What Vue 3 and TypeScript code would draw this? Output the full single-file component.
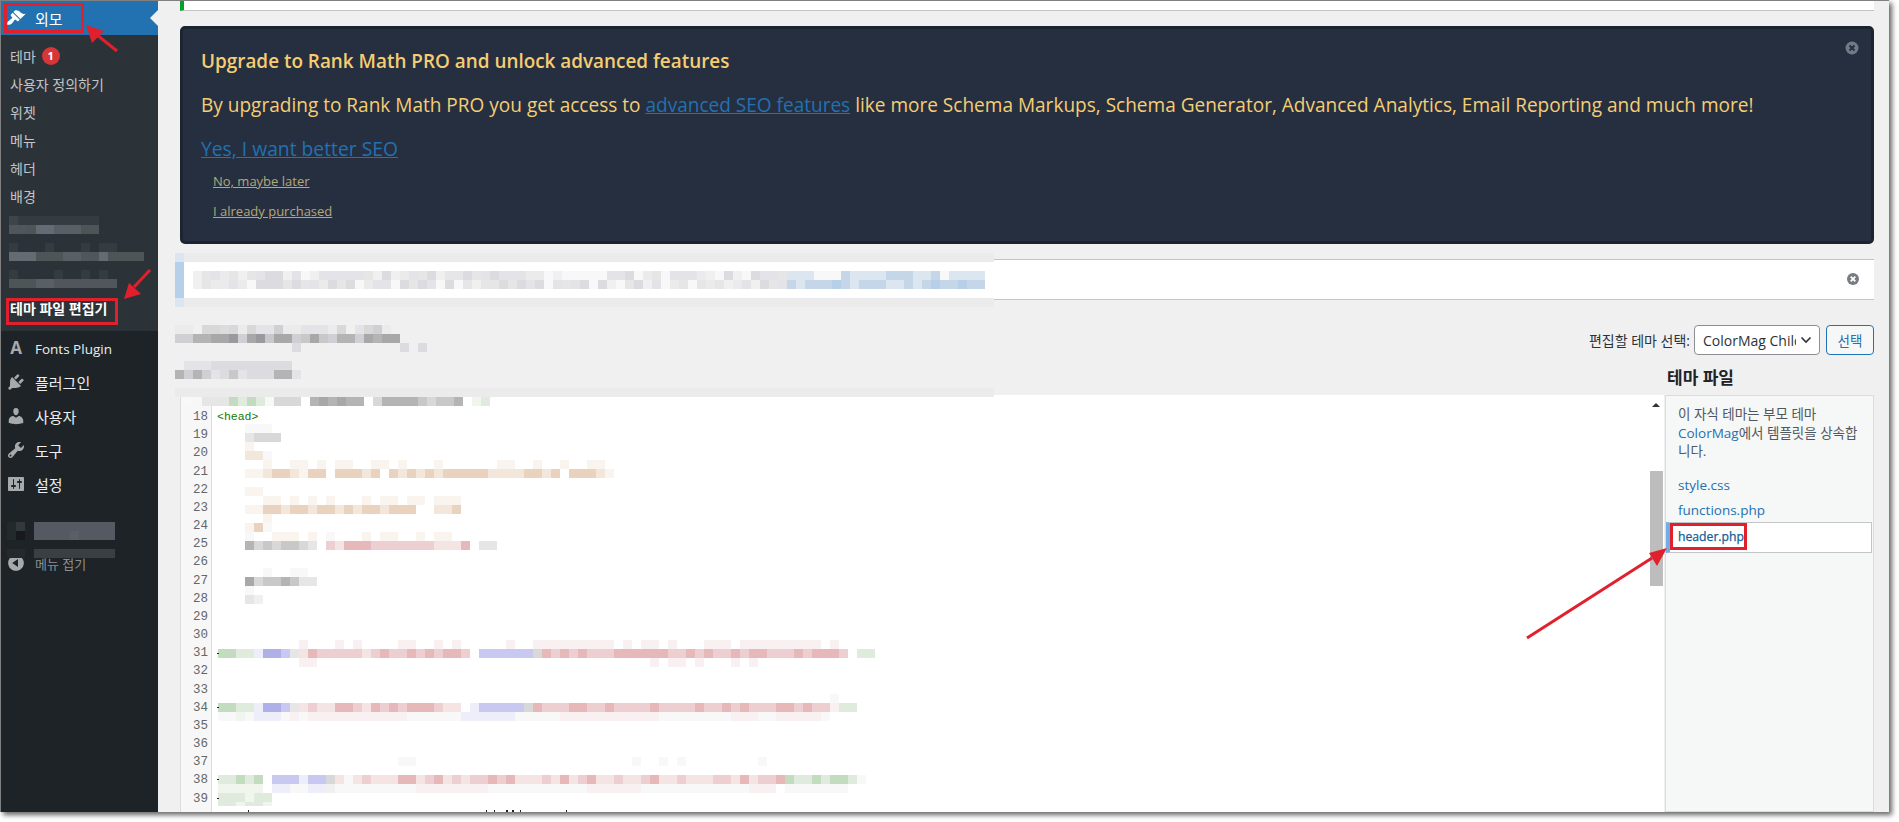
<script setup lang="ts">
type Mosaic = { x: number; y: number; rows: string[]; h?: number }

const palette: Record<string, string> = {
  a: '#f8f8f8', b: '#f0f0f0', c: '#e6e6e6', d: '#d8d8d8', e: '#c8c8c8', f: '#b4b4b4', g: '#a8a8a8', k: '#989a9e',
  K: '#ebebec', l: '#e4e4e8', m: '#dcdce0', n: '#d0d0d4',
  o: '#faf4ef', p: '#f3e6da', q: '#e9d3bf',
  r: '#f5e4e4', s: '#edcfd1', t: '#e6b8ba', u: '#f9f1f1',
  v: '#f0f5ee', w: '#dfebdc', x: '#c3dcbf',
  y: '#eeeefb', z: '#c8c8f0', Z: '#b0b0e8',
  h: '#dbe6f0', i: '#c4d6e8', j: '#b5d0e8',
  A: '#343b41', B: '#3d444a', C: '#464c52', D: '#50565b', E: '#5a5f66', F: '#666a72', G: '#4d5556',
  H: '#24292c', I: '#17191c', J: '#33383c', L: '#555a62', M: '#4a4d52', N: '#3a3f44',
}

let seed = 7
const s = (chars: string, n: number): string => {
  let out = ''
  for (let i = 0; i < n; i++) {
    seed = (seed * 1103515245 + 12345) % 2147483648
    out += chars[(seed >> 8) % chars.length]
  }
  return out
}
const gap = (n: number): string => '.'.repeat(n)

const mosaics: Mosaic[] = [
  // sidebar
  { x: 9, y: 216, rows: [s('ABCA', 10), s('DEFG', 10)] },
  { x: 9, y: 243, rows: ['A...A...A.AA', s('DEGF', 15)] },
  { x: 9, y: 270, rows: ['A....A..A.A', s('DEGF', 12)] },
  { x: 7, y: 522, rows: ['HJ', 'HI'] },
  { x: 34, y: 522, rows: [s('LMNL', 9), s('LMEL', 9)] },
  { x: 7, y: 549, rows: ['HH'] },
  { x: 34, y: 549, rows: ['NNNNNNNNN'] },
  // notice
  { x: 175, y: 253, rows: ['h' + 'K'.repeat(90)] },
  { x: 175, y: 262, rows: ['j', 'j', 'j', 'j'] },
  { x: 175, y: 298, rows: ['h' + 'K'.repeat(90)] },
  {
    x: 193, y: 271,
    rows: [
      s('lmabKcl', 66) + s('hhiah', 22),
      s('alKmcmb', 66) + s('ijihi', 22),
    ],
  },
  // headings
  { x: 175, y: 325, rows: [s('lmbKnd.', 25)] },
  { x: 175, y: 334, rows: [s('nfgkfge', 25)] },
  { x: 175, y: 343, rows: ['.............m...........m.m'] },
  { x: 175, y: 361, rows: ['.' + s('mnel', 12)] },
  { x: 175, y: 370, rows: [s('lmenf', 14)] },
  { x: 175, y: 388, rows: ['K'.repeat(91)] },
  {
    x: 175, y: 397,
    rows: ['.a.' + s('c', 3) + 'xwxwa' + 'ddd' + '.' + 'fgfgff' + '.' + s('efd', 10) + '.' + 'vw'],
  },
  // editor lines
  {
    x: 218, y: 424,
    rows: [
      '...aaa',
      '...cddd',
      '...o',
      '...ppa',
      '.....o..oo.o.oo..oo.o...o......oo..o..o..oo',
      '...oop' + 'qqp' + 'o' + 'qq' + '.' + 'qqqpq' + '.' + s('pqq', 19) + '.' + 'qqqpo',
      gap(5),
      '...oo',
      '.....oo.o.o.o...o.oo.oo.ooo',
      '...oo' + s('qqp', 17) + '..' + 'ppq',
      '.....o',
      '...oqa',
      '...a..ooo.o.a...o.oo..o.oo',
      '...fdedeedc.' + s('sstr', 16) + '.cc',
      gap(5),
      gap(5),
      '.....a..aa',
      '...gdeefecc',
      '...a',
      '...cb',
    ],
  },
  {
    x: 218, y: 640,
    rows: [
      '.........u...u.u....uu..u.u.....u..uuuuuuuuu.u.uu.u...uuu.uuuuuuuuu.u',
      'xxwwyZZzc' + s('rsstt', 19) + '.' + 'zzzzzz' + 'd' + s('sstts', 34) + '.ww',
      '.........uu.....................................u.uu.u...u.u',
    ],
  },
  {
    x: 218, y: 694,
    rows: [
      gap(68) + 'a',
      'xxwwyZZzc' + s('rsstt', 18) + '.' + 'yzzzzz' + 'd' + s('sstts', 33) + 'uww',
      s('av', 4) + 'yyya' + s('ua', 19) + 'yyyyyya' + s('ua', 33) + 'a',
    ],
  },
  {
    x: 218, y: 757,
    rows: [
      gap(20) + 'aa' + gap(24) + 'a..a.a' + gap(8) + 'a',
      gap(5),
      'wwxwx.zzzyzzd' + 'ra' + s('rsstr', 48) + s('wwx', 8) + 'a',
      s('av', 5) + '.yyaayyb' + s('ua', 49) + '.' + s('av', 7),
      s('wwv', 6),
    ],
  },
  { x: 218, y: 802, h: 4, rows: ['wwvwwv'] },
]

const cells = mosaics.flatMap((m) =>
  m.rows.flatMap((row, r) =>
    [...row].flatMap((ch, c) =>
      ch === '.'
        ? []
        : [{ x: m.x + c * 9, y: m.y + r * 9, h: m.h ?? 9, fill: palette[ch] }],
    ),
  ),
)

const ticks: [number, number, number, number][] = [
  [217, 653, 2, 1], [217, 707, 2, 1], [217, 779, 2, 1], [217, 798, 2, 1],
  [248, 810, 1, 2], [486, 810, 1, 2], [494, 810, 1, 2], [506, 810, 2, 2], [512, 810, 2, 2], [520, 810, 1, 2], [566, 810, 1, 2],
]

const subItems = ['테마', '사용자 정의하기', '위젯', '메뉴', '헤더', '배경', '', '', '']

const lineNumbers = Array.from({ length: 22 }, (_, i) => 18 + i)

const icons = {
  appearance:
    'M14.48 11.06L7.41 3.99l1.5-1.5c.5-.56 2.3-.47 3.51.32 1.21.8 1.43 1.28 2.91 2.1 1.18.64 2.45 1.26 4.45.85zm-.71.71L6.7 4.7 4.93 6.47c-.39.39-.39 1.02 0 1.41l1.06 1.06c.39.39.39 1.03 0 1.42-.6.6-1.43 1.11-2.21 1.69-.35.26-.7.53-1.01.84C1.43 13.23.91 15.03 1.3 16.7c1.66.39 3.45-.14 4.8-1.48.31-.31.58-.66.84-1.01.58-.78 1.09-1.61 1.69-2.21.39-.39 1.02-.39 1.41 0l1.06 1.06c.39.39 1.02.39 1.41 0z',
  plugins:
    'M13.11 4.36L9.87 7.6 8 5.73l3.24-3.24c.35-.34 1.05-.2 1.56.32.52.51.66 1.21.31 1.55zm-8 1.77l.91-1.12 9.01 9.01-1.19.84c-.71.71-2.63 1.16-3.82 1.16H6.14L4.9 17.26c-.59.59-1.54.59-2.12 0-.59-.58-.59-1.53 0-2.12l1.24-1.24v-3.88c0-1.13.4-3.19 1.09-3.89zm7.26 3.97l3.24-3.24c.34-.35 1.04-.21 1.55.31.52.51.66 1.21.31 1.55l-3.24 3.25z',
  users:
    'M10 9.25c-2.27 0-2.73-3.44-2.73-3.44C7 4.02 7.82 2 9.97 2c2.16 0 2.98 2.02 2.71 3.81 0 0-.41 3.44-2.68 3.44zm0 2.57L12.72 10c2.39 0 4.52 2.33 4.52 4.53v2.49s-3.65 1.13-7.24 1.13c-3.65 0-7.24-1.13-7.24-1.13v-2.49c0-2.25 1.94-4.48 4.47-4.48z',
  tools:
    'M16.68 9.77c-1.34 1.34-3.3 1.67-4.95.99l-5.41 6.52c-.99.99-2.59.99-3.58 0s-.99-2.59 0-3.57l6.52-5.42c-.68-1.65-.35-3.61.99-4.95 1.28-1.28 3.12-1.62 4.72-1.06l-2.89 2.89 2.82 2.82 2.86-2.87c.53 1.58.18 3.39-1.08 4.65zM3.81 16.21c.4.39 1.04.39 1.43 0 .4-.4.4-1.04 0-1.43-.39-.4-1.03-.4-1.43 0-.39.39-.39 1.03 0 1.43z',
  settings:
    'M18 16V4c0-.55-.45-1-1-1H3c-.55 0-1 .45-1 1v12c0 .55.45 1 1 1h14c.55 0 1-.45 1-1zM8 11h1c.55 0 1 .45 1 1s-.45 1-1 1H8v1.5c0 .28-.22.5-.5.5s-.5-.22-.5-.5V13H6c-.55 0-1-.45-1-1s.45-1 1-1h1V5.5c0-.28.22-.5.5-.5s.5.22.5.5V11zm5-2h-1c-.55 0-1-.45-1-1s.45-1 1-1h1V5.5c0-.28.22-.5.5-.5s.5.22.5.5V7h1c.55 0 1 .45 1 1s-.45 1-1 1h-1v5.5c0 .28-.22.5-.5.5s-.5-.22-.5-.5V9z',
  collapse:
    'M10 2.16c4.33 0 7.84 3.51 7.84 7.84s-3.51 7.84-7.84 7.84S2.16 14.33 2.16 10 5.71 2.16 10 2.16zm2 11.72V6.12L6.18 9.97z',
}

const topItems = [
  { label: '플러그인', icon: icons.plugins },
  { label: '사용자', icon: icons.users },
  { label: '도구', icon: icons.tools },
  { label: '설정', icon: icons.settings },
]
</script>

<template>
  <div class="page">
    <div class="window">
      <aside class="sidebar">
        <div class="menu-item active">
          <svg class="icon" viewBox="0 0 20 20"><path :d="icons.appearance" /></svg>
          <span>외모</span>
          <i class="notch"></i>
        </div>
        <div class="submenu">
          <div v-for="(item, i) in subItems" :key="i" class="sub-item">
            {{ item }}<b v-if="i === 0" class="badge">1</b>
          </div>
          <div class="sub-item current">테마 파일 편집기</div>
        </div>
        <div class="menu-item">
          <span class="icon letter">A</span>
          <span class="latin">Fonts Plugin</span>
        </div>
        <div v-for="item in topItems" :key="item.label" class="menu-item">
          <svg class="icon" viewBox="0 0 20 20"><path :d="item.icon" /></svg>
          <span>{{ item.label }}</span>
        </div>
        <div class="menu-item spaced"></div>
        <div class="menu-item dim">
          <svg class="icon" viewBox="0 0 20 20"><path :d="icons.collapse" /></svg>
          <span class="collapse-label">메뉴 접기</span>
        </div>
      </aside>

      <main class="main">
        <div class="top-notice"></div>

        <section class="promo">
          <svg class="promo-close" viewBox="0 0 14 14">
            <circle cx="7" cy="7" r="6.5" />
            <path d="M4.5 4.5l5 5m0-5l-5 5" />
          </svg>
          <h2>Upgrade to Rank Math PRO and unlock advanced features</h2>
          <p>By upgrading to Rank Math PRO you get access to <a>advanced SEO features</a> like more Schema Markups, Schema Generator, Advanced Analytics, Email Reporting and much more!</p>
          <a class="yes">Yes, I want better SEO</a>
          <a class="minor">No, maybe later</a>
          <a class="minor">I already purchased</a>
        </section>

        <div class="notice">
          <svg class="notice-close" viewBox="0 0 14 14">
            <circle cx="7" cy="7" r="6" />
            <path d="M4.7 4.7l4.6 4.6m0-4.6l-4.6 4.6" />
          </svg>
        </div>

        <div class="theme-select">
          <label>편집할 테마 선택:</label>
          <div class="select">
            <span>ColorMag Child</span>
            <svg viewBox="0 0 12 8"><path d="M1.5 1.5L6 6l4.5-4.5" /></svg>
          </div>
          <button class="btn">선택</button>
        </div>

        <h3 class="files-title">테마 파일</h3>

        <div class="workspace">
          <div class="editor">
            <div class="gutter">
              <div v-for="n in lineNumbers" :key="n" class="line-no">{{ n }}</div>
            </div>
            <div class="code"><span class="tag">&lt;head&gt;</span></div>
            <div class="scrollbar">
              <i class="scroll-up"></i>
              <i class="thumb"></i>
            </div>
          </div>
          <div class="files">
            <p class="files-note">
              이 자식 테마는 부모 테마<br />
              <a>ColorMag</a>에서 템플릿을 상속합<br />
              니다.
            </p>
            <a class="file">style.css</a>
            <a class="file">functions.php</a>
            <a class="file selected">header.php</a>
          </div>
        </div>
      </main>
    </div>

    <svg class="overlay" viewBox="0 0 1899 822" width="1899" height="822">
      <g shape-rendering="crispEdges">
        <rect v-for="(c, i) in cells" :key="i" :x="c.x" :y="c.y" width="9" :height="c.h" :fill="c.fill" />
        <rect v-for="(t, i) in ticks" :key="'t' + i" :x="t[0]" :y="t[1]" :width="t[2]" :height="t[3]" fill="#222" />
      </g>
      <g fill="none" stroke="#e0202c" stroke-width="3">
        <rect x="5.5" y="4.5" width="77" height="27" />
        <rect x="7.5" y="299.5" width="109" height="24" />
        <rect x="1671.5" y="524.5" width="74" height="24" />
      </g>
      <g stroke="#e0202c" stroke-width="3" fill="#e0202c">
        <path d="M97 35L117 51" />
        <path stroke="none" d="M86 25L104 31L92 43Z" />
        <path d="M134 287L150 270" />
        <path stroke="none" d="M124 299L129 283L141 294Z" />
        <path d="M1527 638L1652 558" />
        <path stroke="none" d="M1667 548L1649 553L1657 566Z" />
      </g>
    </svg>
  </div>
</template>

<style>
html, body { margin: 0; background: #fff; }
</style>

<style scoped>
.page {
  position: relative;
  width: 1899px;
  height: 822px;
  background: #fff;
  overflow: hidden;
  font-family: "Open Sans", "Noto Sans CJK KR", sans-serif;
}
.window {
  display: flex;
  width: 1888px;
  height: 811px;
  border-top: 1px solid #808080;
  border-left: 1px solid #808080;
  background: #f0f0f1;
  overflow: hidden;
  box-shadow: 3px 3px 5px rgba(0, 0, 0, 0.6);
}
.overlay {
  position: absolute;
  left: 0;
  top: 0;
  pointer-events: none;
}

/* sidebar */
.sidebar {
  flex: 0 0 157px;
  background: #1d2327;
  color: #f0f0f1;
}
.menu-item {
  position: relative;
  display: flex;
  align-items: center;
  gap: 9px;
  height: 34px;
  padding-left: 5px;
  font-size: 15px;
  color: #eceeef;
}
.menu-item.active {
  background: #2271b1;
  color: #fff;
}
.menu-item.spaced { margin-top: 11px; }
.menu-item.dim { color: #a7aaad; }
.icon {
  flex: 0 0 20px;
  width: 20px;
  height: 20px;
  fill: #a7aaad;
}
.active .icon { fill: #fff; }
.letter {
  font-size: 17px;
  font-weight: 700;
  color: #a7aaad;
  text-align: center;
  line-height: 20px;
}
.latin { font-size: 13.5px; line-height: 20px; padding-top: 1px; }
.collapse-label { font-size: 13px; color: #8c8f94; }
.notch {
  position: absolute;
  right: 0;
  top: 9px;
  border: 8px solid transparent;
  border-right-color: #f0f0f1;
  border-left-width: 0;
}
.submenu {
  background: #2c3338;
  padding: 7px 0 9px;
}
.sub-item {
  display: flex;
  align-items: center;
  height: 28px;
  padding-left: 9px;
  font-size: 14px;
  color: #c3c4c7;
}
.sub-item.current {
  color: #fff;
  font-weight: 700;
}
.badge {
  width: 18px;
  height: 18px;
  margin-left: 6px;
  border-radius: 50%;
  background: #d63638;
  color: #fff;
  font-size: 11px;
  line-height: 18px;
  text-align: center;
}

/* main */
.main {
  flex: 1;
  min-width: 0;
  display: flex;
  flex-direction: column;
  padding: 0 15px 0 22px;
}
.top-notice {
  flex: none;
  height: 9px;
  background: #fff;
  border-left: 4px solid #00a32a;
  border-bottom: 1px solid #c3c4c7;
}
.promo {
  position: relative;
  flex: none;
  box-sizing: border-box;
  height: 218px;
  margin-top: 15px;
  padding: 20px 0 0 18px;
  background: #262f40;
  border: 3px solid #1b2431;
  border-radius: 5px;
  color: #f5cd73;
  display: flex;
  flex-direction: column;
  align-items: flex-start;
}
.promo-close {
  position: absolute;
  right: 12px;
  top: 12px;
  width: 14px;
  height: 14px;
}
.promo-close circle { fill: #727a86; }
.promo-close path { stroke: #262f40; stroke-width: 2; }
.promo h2 {
  margin: 0;
  font-size: 18.9px;
  line-height: 24px;
  font-weight: 600;
}
.promo p {
  margin: 20px 0 0;
  font-size: 19.05px;
  line-height: 24px;
  white-space: nowrap;
}
.promo a {
  color: #2271b1;
  text-decoration: underline;
}
.promo .yes {
  margin-top: 20px;
  font-size: 19.3px;
  line-height: 24px;
}
.promo .minor {
  margin: 10px 0 0 12px;
  font-size: 13px;
  line-height: 20px;
  color: #b5a878;
}
.notice {
  position: relative;
  flex: none;
  box-sizing: border-box;
  height: 41px;
  margin-top: 15px;
  background: #fff;
  border: 1px solid #c3c4c7;
  border-right: 0;
}
.notice-close {
  position: absolute;
  right: 14px;
  top: 12px;
  width: 14px;
  height: 14px;
}
.notice-close circle { fill: #787c82; }
.notice-close path { stroke: #fff; stroke-width: 1.8; }
.theme-select {
  flex: none;
  display: flex;
  justify-content: flex-end;
  align-items: center;
  height: 30px;
  margin-top: 25px;
  gap: 4px;
}
.theme-select label {
  font-size: 14px;
  color: #2c3338;
}
.select {
  box-sizing: border-box;
  width: 126px;
  height: 30px;
  display: flex;
  align-items: center;
  justify-content: space-between;
  padding: 0 7px 0 8px;
  background: #fff;
  border: 1px solid #8c8f94;
  border-radius: 4px;
  font-size: 14px;
  color: #2c3338;
}
.select span {
  width: 93px;
  overflow: hidden;
  white-space: nowrap;
}
.select svg {
  width: 12px;
  height: 8px;
  fill: none;
  stroke: #2c3338;
  stroke-width: 1.6;
}
.btn {
  box-sizing: border-box;
  width: 48px;
  height: 30px;
  margin-left: 2px;
  background: #f6f7f7;
  border: 1px solid #2271b1;
  border-radius: 4px;
  color: #2271b1;
  font: inherit;
  font-size: 13.5px;
  padding: 0;
}
.files-title {
  flex: none;
  margin: 0;
  height: 40px;
  padding: 13px 0 0 1487px;
  box-sizing: border-box;
  font-size: 17px;
  line-height: 20px;
  font-weight: 700;
  color: #1d2327;
  white-space: nowrap;
}
.workspace {
  flex: 1;
  min-height: 0;
  display: flex;
  gap: 1px;
}
.editor {
  flex: 0 0 1484px;
  display: flex;
  background: #fff;
  overflow: hidden;
}
.gutter {
  flex: 0 0 30px;
  padding: 13px 0 0;
  background: #f7f7f7;
  border-left: 1px solid #ddd;
  border-right: 1px solid #ddd;
}
.line-no {
  height: 18.18px;
  line-height: 18.18px;
  padding-right: 3px;
  text-align: right;
  font-family: "Liberation Mono", monospace;
  font-size: 12.5px;
  color: #666;
}
.code {
  flex: 1;
  padding: 13px 0 0 5px;
  font-family: "Liberation Mono", monospace;
  font-size: 11.5px;
  line-height: 18.18px;
}
.tag { color: #170; }
.scrollbar {
  flex: 0 0 16px;
  display: flex;
  flex-direction: column;
  align-items: center;
}
.scroll-up {
  margin-top: 8px;
  border: 4px solid transparent;
  border-bottom: 4px solid #333;
  border-top-width: 0;
}
.thumb {
  width: 13px;
  height: 115px;
  margin-top: 64px;
  background: #bdbdbd;
}
.files {
  flex: 1;
  box-sizing: border-box;
  padding-top: 9px;
  background: #f6f7f7;
  border: 1px solid #dcdcde;
}
.files-note {
  margin: 0 0 12px;
  padding-left: 12px;
  font-size: 13.5px;
  line-height: 18.5px;
  color: #50575e;
  white-space: nowrap;
}
.files-note a { color: #2271b1; }
.file {
  display: block;
  box-sizing: border-box;
  height: 25px;
  line-height: 25px;
  padding-left: 12px;
  font-size: 13.5px;
  color: #2271b1;
}
.file.selected {
  height: 31px;
  margin: -1px 1px 0 0;
  line-height: 28px;
  padding-left: 8px;
  background: #fff;
  border: 1px solid #c3c4c7;
  border-left: 4px solid #72aee6;
  font-size: 12.2px;
  -webkit-text-stroke: 0.25px #135e96;
  color: #135e96;
}
</style>
